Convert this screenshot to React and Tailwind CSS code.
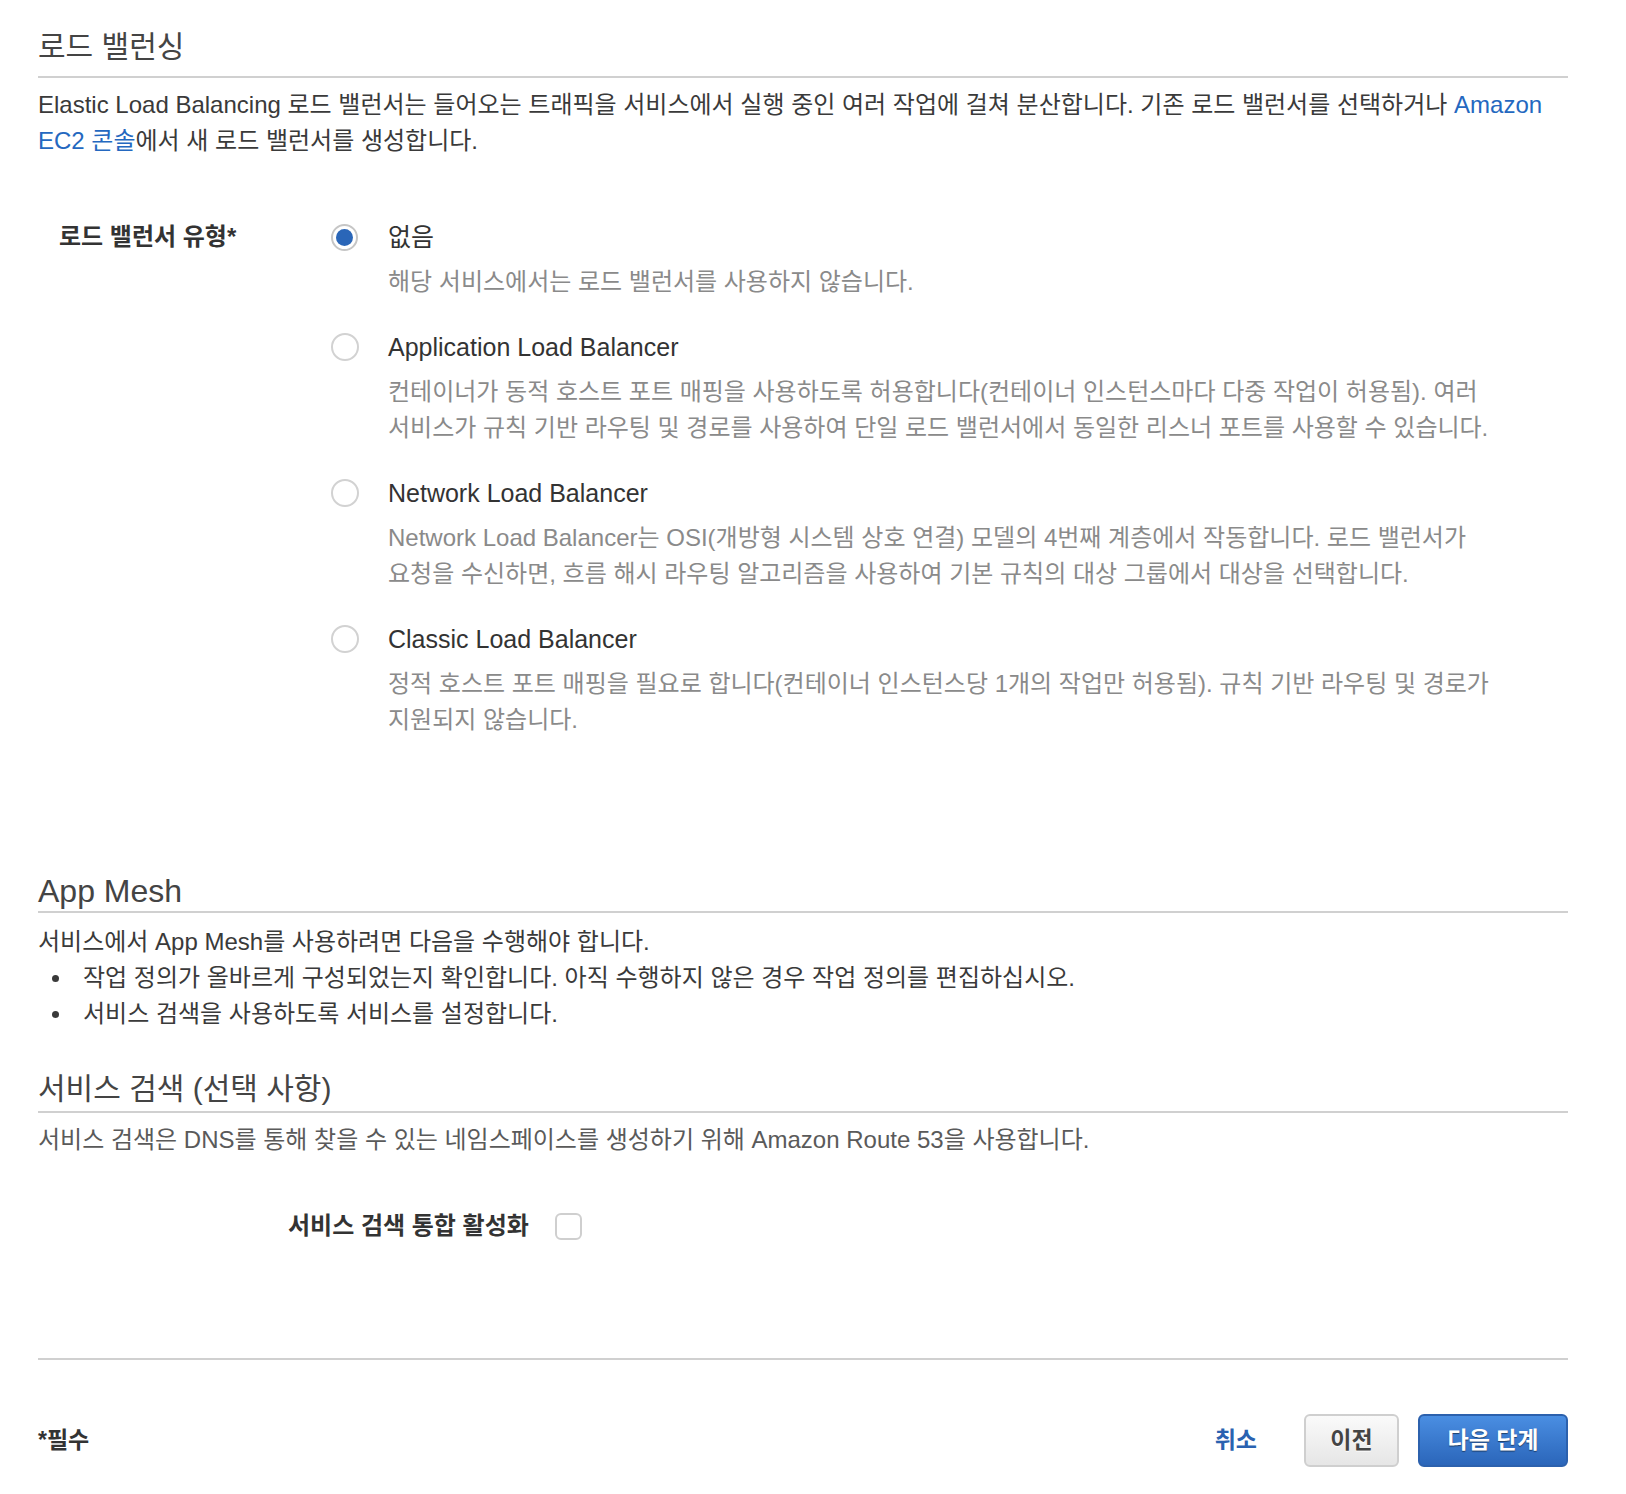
import React from "react";

const options = [
    {
        label: "없음",
        desc: ["해당 서비스에서는 로드 밸런서를 사용하지 않습니다."],
        checked: true,
    },
    {
        label: "Application Load Balancer",
        desc: [
            "컨테이너가 동적 호스트 포트 매핑을 사용하도록 허용합니다(컨테이너 인스턴스마다 다중 작업이 허용됨). 여러",
            "서비스가 규칙 기반 라우팅 및 경로를 사용하여 단일 로드 밸런서에서 동일한 리스너 포트를 사용할 수 있습니다.",
        ],
    },
    {
        label: "Network Load Balancer",
        desc: [
            "Network Load Balancer는 OSI(개방형 시스템 상호 연결) 모델의 4번째 계층에서 작동합니다. 로드 밸런서가",
            "요청을 수신하면, 흐름 해시 라우팅 알고리즘을 사용하여 기본 규칙의 대상 그룹에서 대상을 선택합니다.",
        ],
    },
    {
        label: "Classic Load Balancer",
        desc: [
            "정적 호스트 포트 매핑을 필요로 합니다(컨테이너 인스턴스당 1개의 작업만 허용됨). 규칙 기반 라우팅 및 경로가",
            "지원되지 않습니다.",
        ],
    },
];

const Radio = ({ checked }) =>
    checked ? (
        <div className="h-[27px] w-[27px] rounded-full border-2 border-[#c6c6c6] bg-white flex items-center justify-center">
            <div className="h-[17px] w-[17px] rounded-full bg-[#2a66b8]"></div>
        </div>
    ) : (
        <div className="h-[28px] w-[28px] rounded-full border-2 border-[#d2d2d2] bg-white"></div>
    );

const SectionTitle = ({ children, pb, size = "text-[30px]" }) => (
    <h2 className={`${size} leading-[36px] text-[#444] border-b-2 border-[#d0d0d0] ${pb}`}>
        {children}
    </h2>
);

const App = () => {
    return (
        <div className="min-h-screen bg-white [font-family:'Liberation_Sans','Noto_Sans_CJK_KR',sans-serif] text-[#3a3a3a]">
            <div className="ml-[38px] w-[1530px] pt-[29px] pb-[27px]">
                {/* 로드 밸런싱 */}
                <SectionTitle pb="pb-[11px]">로드 밸런싱</SectionTitle>
                <p className="mt-[9px] text-[24px] leading-[36px]">
                    Elastic Load Balancing 로드 밸런서는 들어오는 트래픽을 서비스에서 실행 중인 여러 작업에 걸쳐 분산합니다. 기존 로드 밸런서를 선택하거나{" "}
                    <span className="text-[#2468c0]">Amazon</span>
                    <br />
                    <span className="text-[#2468c0]">EC2 콘솔</span>에서 새 로드 밸런서를 생성합니다.
                </p>

                <div className="mt-[60px] flex">
                    <div className="w-[293px] pl-[21px] text-[24px] leading-[36px] font-bold text-[#333]">
                        로드 밸런서 유형*
                    </div>
                    <div className="flex flex-col gap-[29px]">
                        {options.map((opt) => (
                            <div key={opt.label} className="flex">
                                <div className="w-[57px] h-[36px] flex items-center">
                                    <Radio checked={opt.checked} />
                                </div>
                                <div>
                                    <div className="text-[25px] leading-[36px] text-[#333]">{opt.label}</div>
                                    <div className="mt-[9px] text-[24px] leading-[36px] text-[#8a8a8a] whitespace-nowrap">
                                        {opt.desc.map((line, i) => (
                                            <div key={i}>{line}</div>
                                        ))}
                                    </div>
                                </div>
                            </div>
                        ))}
                    </div>
                </div>

                {/* App Mesh */}
                <div className="mt-[135px]">
                    <SectionTitle pb="pb-[2px]" size="text-[32px]">App Mesh</SectionTitle>
                    <div className="mt-[11px] text-[24px] leading-[36px]">
                        <p>서비스에서 App Mesh를 사용하려면 다음을 수행해야 합니다.</p>
                        <ul>
                            <li className="flex items-center">
                                <span className="ml-[14px] mr-[24px] h-[7px] w-[7px] rounded-full bg-[#3a3a3a]"></span>
                                작업 정의가 올바르게 구성되었는지 확인합니다. 아직 수행하지 않은 경우 작업 정의를 편집하십시오.
                            </li>
                            <li className="flex items-center">
                                <span className="ml-[14px] mr-[24px] h-[7px] w-[7px] rounded-full bg-[#3a3a3a]"></span>
                                서비스 검색을 사용하도록 서비스를 설정합니다.
                            </li>
                        </ul>
                    </div>
                </div>

                {/* 서비스 검색 */}
                <div className="mt-[39px]">
                    <SectionTitle pb="pb-[4px]">서비스 검색 (선택 사항)</SectionTitle>
                    <p className="mt-[9px] text-[24px] leading-[36px] text-[#5a5a5a]">
                        서비스 검색은 DNS를 통해 찾을 수 있는 네임스페이스를 생성하기 위해 Amazon Route 53을 사용합니다.
                    </p>
                    <div className="mt-[50px] h-[36px] flex items-center pl-[250px]">
                        <span className="text-[24px] font-bold text-[#333]">서비스 검색 통합 활성화</span>
                        <span className="ml-[26px] h-[27px] w-[27px] rounded-[6px] border-2 border-[#cfcfcf] bg-white"></span>
                    </div>
                </div>

                {/* footer */}
                <div className="mt-[114px] border-t-2 border-[#d0d0d0]"></div>
                <div className="mt-[54px] flex items-center justify-between">
                    <span className="text-[23px] font-bold text-[#333]">*필수</span>
                    <div className="flex items-center">
                        <button className="text-[23px] font-bold text-[#2a62b0] mr-[47px]">취소</button>
                        <button className="h-[53px] w-[95px] rounded-[6px] border-2 border-[#cfcfcf] bg-gradient-to-b from-[#fafafa] to-[#e6e6e6] text-[23px] font-bold text-[#444] [text-shadow:0_1px_0_#fff] mr-[19px]">
                            이전
                        </button>
                        <button className="h-[53px] w-[150px] rounded-[6px] border-2 border-[#2c61ad] bg-gradient-to-b from-[#4a8ee2] to-[#2b66ba] text-[23px] font-bold text-white [text-shadow:0_1px_1px_rgba(0,0,0,0.5)]">
                            다음 단계
                        </button>
                    </div>
                </div>
            </div>
        </div>
    );
};

export default App;
